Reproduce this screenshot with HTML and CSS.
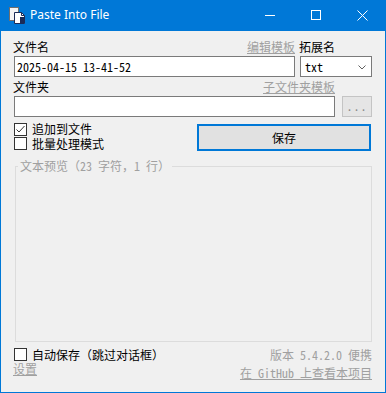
FILE: index.html
```html
<!DOCTYPE html>
<html lang="zh-CN">
<head>
<meta charset="utf-8">
<title>Paste Into File</title>
<link rel="stylesheet" href="styles.css">
</head>
<body>
<div class="window">
  <div class="titlebar">
    <svg class="app-icon" width="17" height="18" viewBox="0 0 17 18">
      <rect x="0.5" y="0.5" width="9" height="13" fill="#f4f4f4" stroke="#6f6f6f"/>
      <path d="M5.5 5.5 H12.5 L15.5 8.5 V16.5 H5.5 Z" fill="#ffffff" stroke="#1b2b57"/>
      <path d="M12.5 5.5 V8.5 H15.5" fill="none" stroke="#1b2b57"/>
      <rect x="11" y="10" width="4" height="6" fill="#1b2b57"/>
    </svg>
    <span class="title">Paste Into File</span>
    <div class="caption">
      <span class="cap"><svg width="10" height="10" viewBox="0 0 10 10"><path d="M0 5.5 H10" stroke="#fff" stroke-width="1"/></svg></span>
      <span class="cap"><svg width="10" height="10" viewBox="0 0 10 10"><rect x="0.5" y="0.5" width="9" height="9" fill="none" stroke="#fff"/></svg></span>
      <span class="cap"><svg width="11" height="11" viewBox="0 0 11 11"><path d="M0.5 0.5 L10.5 10.5 M10.5 0.5 L0.5 10.5" stroke="#fff" stroke-width="1"/></svg></span>
    </div>
  </div>

  <div class="client">
    <div class="row label-row">
      <div class="col-main">
        <span class="label">文件名</span>
        <a class="link">编辑模板</a>
      </div>
      <div class="col-ext"><span class="label">拓展名</span></div>
    </div>

    <div class="row field-row">
      <div class="textbox name-box">2025-04-15 13-41-52</div>
      <div class="combo">
        <span>txt</span>
        <svg class="chev" width="8" height="5" viewBox="0 0 8 5"><path d="M0.5 0.5 L4 4 L7.5 0.5" fill="none" stroke="#606060"/></svg>
      </div>
    </div>

    <div class="row label-row2">
      <div class="col-folder">
        <span class="label">文件夹</span>
        <a class="link">子文件夹模板</a>
      </div>
    </div>

    <div class="row field-row2">
      <div class="textbox folder-box"></div>
      <div class="browse">...</div>
    </div>

    <div class="row options">
      <div class="checks">
        <div class="check">
          <span class="box"><svg width="11" height="11" viewBox="0 0 11 11"><path d="M1.5 5.5 L4 8 L9.5 2" fill="none" stroke="#333" stroke-width="1"/></svg></span>
          <span>追加到文件</span>
        </div>
        <div class="check">
          <span class="box"></span>
          <span>批量处理模式</span>
        </div>
      </div>
      <div class="save">保存</div>
    </div>

    <fieldset class="preview">
      <legend>文本预览（23 字符，1 行）</legend>
    </fieldset>

    <div class="footer">
      <div class="footer-left">
        <div class="check auto">
          <span class="box"></span>
          <span>自动保存（跳过对话框）</span>
        </div>
        <a class="link settings">设置</a>
      </div>
      <div class="footer-right">
        <span class="version">版本 5.4.2.0 便携</span>
        <a class="link github">在 GitHub 上查看本项目</a>
      </div>
    </div>
  </div>
</div>
</body>
</html>
```

FILE: styles.css
```css
* { box-sizing: border-box; }

html, body {
  margin: 0;
  padding: 0;
}

body {
  width: 386px;
  height: 393px;
  overflow: hidden;
  background: #f0f0f0;
  font-family: "Noto Sans Mono CJK SC", "Noto Sans CJK SC", "DejaVu Sans Mono", monospace;
  font-size: 12px;
  line-height: 14px;
  color: #000;
}

.window {
  width: 386px;
  height: 393px;
  border: 1px solid #0078d7;
  border-top: 0;
  display: flex;
  flex-direction: column;
  background: #f0f0f0;
}

/* title bar */
.titlebar {
  height: 31px;
  flex: none;
  background: #0078d7;
  display: flex;
  align-items: flex-start;
  color: #fff;
}

.app-icon {
  margin: 7px 0 0 8px;
  flex: none;
}

.title {
  font-family: "Noto Sans", "Open Sans", sans-serif;
  font-size: 12px;
  line-height: 16px;
  margin: 7px 0 0 4px;
}

.caption {
  margin-left: auto;
  display: flex;
}

.cap {
  width: 46px;
  height: 30px;
  display: flex;
  align-items: center;
  justify-content: center;
}

/* client area */
.client {
  flex: 1;
  display: flex;
  flex-direction: column;
  padding: 9px 13px 0 13px;
}

.row {
  display: flex;
  flex: none;
}

.label {
  margin-left: -1px;
}

.link {
  color: #a0a0a0;
  text-decoration: underline;
  text-underline-offset: 1px;
}

.label-row {
  height: 14px;
  gap: 5px;
}

.col-main {
  width: 281px;
  display: flex;
  justify-content: space-between;
}

.col-ext {
  width: 72px;
}

.field-row {
  margin-top: 2px;
  height: 21px;
  gap: 5px;
}

.textbox {
  height: 21px;
  background: #fff;
  border: 1px solid #7a7a7a;
  padding: 2px 0 0 2px;
  line-height: 15px;
}

.name-box {
  width: 281px;
}

.combo {
  width: 72px;
  height: 21px;
  background: #fff;
  border: 1px solid #7a7a7a;
  display: flex;
  align-items: center;
  justify-content: space-between;
  padding: 0 5px 0 4px;
}

.chev {
  margin-top: 1px;
}

.label-row2 {
  margin-top: 3px;
  height: 14px;
}

.col-folder {
  width: 321px;
  display: flex;
  justify-content: space-between;
}

.field-row2 {
  margin-top: 2px;
  height: 21px;
  gap: 7px;
}

.folder-box {
  width: 321px;
}

.browse {
  width: 30px;
  height: 21px;
  background: #e5e5e5;
  border: 1px solid #c4c4c4;
  color: #8a8a8a;
  text-align: center;
  line-height: 17px;
  letter-spacing: 1px;
}

/* options */
.options {
  margin-top: 4px;
  height: 30px;
}

.checks {
  display: flex;
  flex-direction: column;
  padding-top: 1px;
}

.check {
  height: 15px;
  display: flex;
  align-items: center;
}

.box {
  width: 13px;
  height: 13px;
  flex: none;
  border: 1px solid #333;
  background: #fff;
  margin-right: 5px;
  display: flex;
  align-items: center;
  justify-content: center;
}

.save {
  margin: 3px 1px 0 auto;
  width: 174px;
  height: 27px;
  background: #e1e1e1;
  border: 2px solid #0078d7;
  text-align: center;
  line-height: 23px;
}

/* preview group */
.preview {
  margin: 8px 0 0 1px;
  padding: 0;
  height: 183px;
  border: 1px solid #dcdcdc;
  min-width: 0;
}

.preview legend {
  margin-left: 2px;
  padding: 0 2px;
  color: #a0a0a0;
  line-height: 14px;
}

/* footer */
.footer {
  margin-top: 5px;
  display: flex;
  justify-content: space-between;
}

.footer-left {
  display: flex;
  flex-direction: column;
  align-items: flex-start;
}

.settings {
  margin-left: -1px;
  height: 14px;
}

.footer-right {
  display: flex;
  flex-direction: column;
  align-items: flex-end;
}

.version {
  color: #a0a0a0;
  height: 15px;
  line-height: 15px;
}

.github {
  margin-top: 4px;
}
```
